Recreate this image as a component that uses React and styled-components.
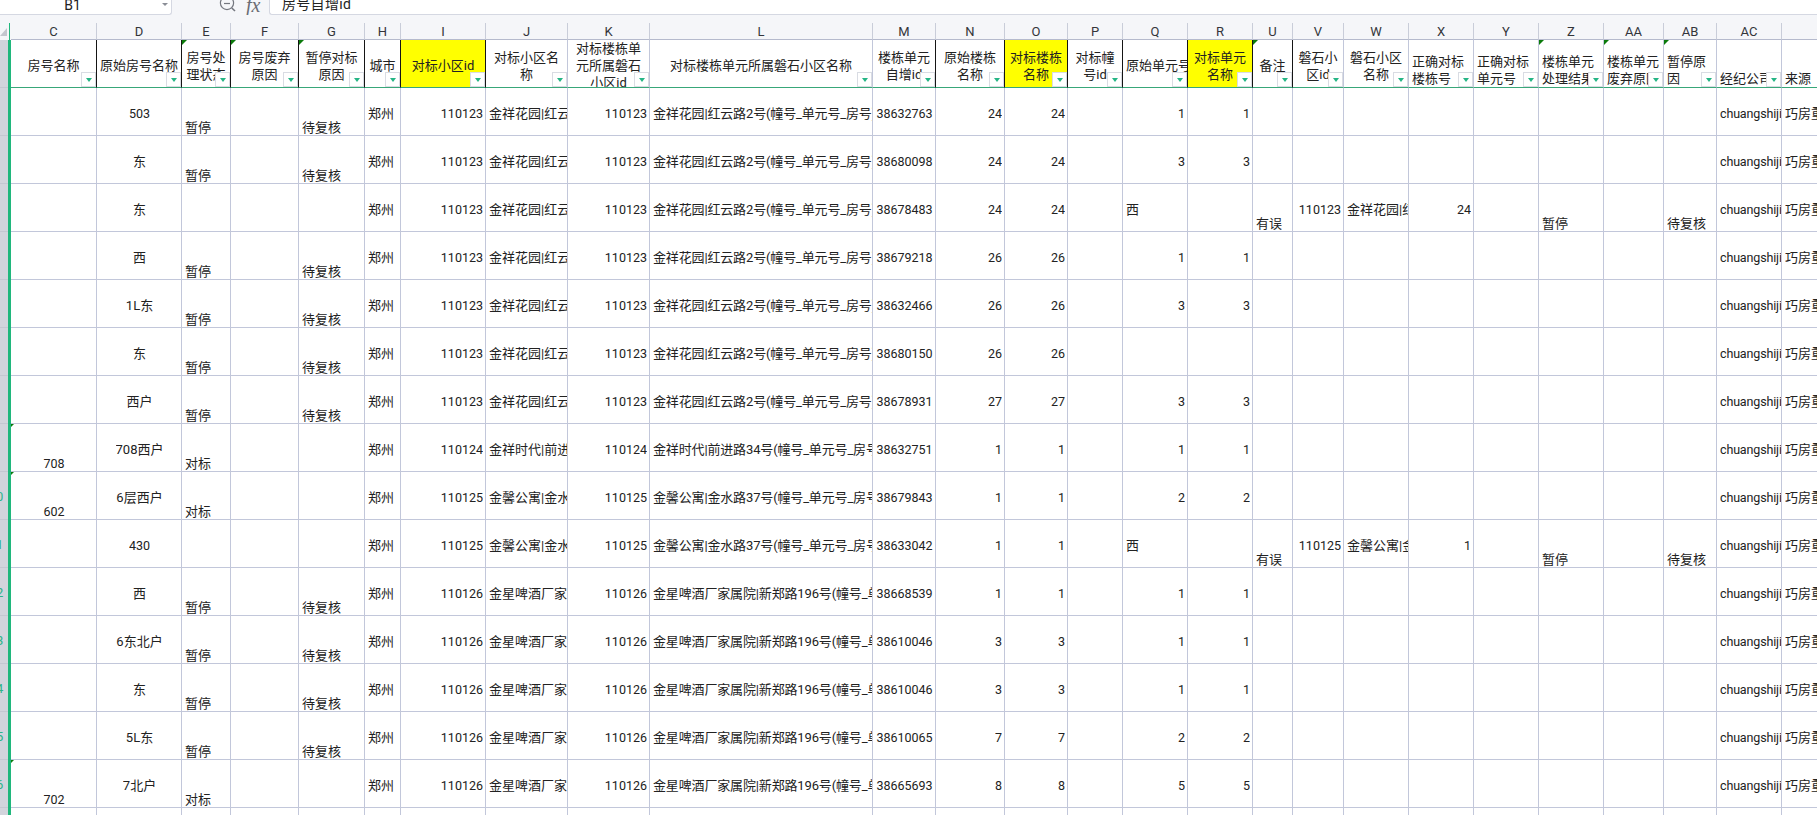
import React from "react";
import styled, { createGlobalStyle } from "styled-components";

const GlobalStyle = createGlobalStyle`
  html, body {
    margin: 0;
    padding: 0;
    background: #ffffff;
    overflow: hidden;
  }
  body {
    font-family: Roboto, "Noto Sans CJK SC", sans-serif;
    font-size: 13px;
    color: #222222;
  }
`;

const GRID_LINE = "#c2c7da";
const DARK_LINE = "#151515";

const columns = [
  { key: "c", name: "C", width: 86, title: "房号名称", h: "center", v: "bottom" },
  { key: "d", name: "D", width: 85, title: "原始房号名称", h: "center", v: "center" },
  { key: "e", name: "E", width: 49, title: "房号处理状态", h: "left", v: "bottom", mark: true },
  { key: "f", name: "F", width: 68, title: "房号废弃原因", h: "left", v: "center", mark: true },
  { key: "g", name: "G", width: 66, title: "暂停对标原因", h: "left", v: "bottom", mark: true },
  { key: "h", name: "H", width: 36, title: "城市", h: "left", v: "center" },
  { key: "i", name: "I", width: 85, title: "对标小区id", h: "right", v: "center", yellow: true },
  { key: "j", name: "J", width: 82, title: "对标小区名称", h: "left", v: "center", light: true },
  { key: "k", name: "K", width: 82, title: "对标楼栋单元所属磐石小区id", h: "right", v: "center", light: true },
  { key: "l", name: "L", width: 223, title: "对标楼栋单元所属磐石小区名称", h: "left", v: "center", light: true },
  { key: "m", name: "M", width: 63, title: "楼栋单元自增id", h: "center", v: "center" },
  { key: "n", name: "N", width: 69, title: "原始楼栋名称", h: "right", v: "center" },
  { key: "o", name: "O", width: 63, title: "对标楼栋名称", h: "right", v: "center", yellow: true },
  { key: "p", name: "P", width: 55, title: "对标幢号id", h: "right", v: "center" },
  { key: "q", name: "Q", width: 65, title: "原始单元号", h: "right", v: "center", nowrap: true },
  { key: "r", name: "R", width: 65, title: "对标单元名称", h: "right", v: "center", yellow: true },
  { key: "u", name: "U", width: 40, title: "备注", h: "left", v: "bottom", mark: true },
  { key: "v", name: "V", width: 51, title: "磐石小区id", h: "right", v: "center", light: true },
  { key: "w", name: "W", width: 65, title: "磐石小区名称", h: "left", v: "center", light: true },
  { key: "x", name: "X", width: 65, title: "正确对标楼栋号", h: "right", v: "center", light: true, titleLeft: true },
  { key: "y", name: "Y", width: 65, title: "正确对标单元号", h: "right", v: "center", light: true, titleLeft: true },
  { key: "z", name: "Z", width: 65, title: "楼栋单元处理结果", h: "left", v: "bottom", light: true, titleLeft: true, mark: true },
  { key: "aa", name: "AA", width: 60, title: "楼栋单元废弃原因", h: "left", v: "center", light: true, titleLeft: true, mark: true },
  { key: "ab", name: "AB", width: 53, title: "暂停原因", h: "left", v: "bottom", light: true, titleLeft: true, mark: true },
  { key: "ac", name: "AC", width: 65, title: "经纪公司", h: "left", v: "center", light: true, titleLeft: true },
  { key: "ad", name: "AD", width: 120, title: "来源", h: "left", v: "center", light: true, titleLeft: true },
];

const template = columns.map((c) => `${c.width}px`).join(" ");

// only the part of each name that shows in its column
const JX = { id: "110123", j: "金祥花园|红云", l: "金祥花园|红云路2号(幢号_单元号_房号)", w: "金祥花园|红" };
const SD = { id: "110124", j: "金祥时代|前进", l: "金祥时代|前进路34号(幢号_单元号_房号" };
const GY = { id: "110125", j: "金馨公寓|金水", l: "金馨公寓|金水路37号(幢号_单元号_房号", w: "金馨公寓|金" };
const PJ = { id: "110126", j: "金星啤酒厂家", l: "金星啤酒厂家属院|新郑路196号(幢号_单" };

const hold = { e: "暂停", g: "待复核" };

const makeRow = (area, m, n, q, r, rest) => ({
  h: "郑州",
  i: area.id,
  j: area.j,
  k: area.id,
  l: area.l,
  m,
  n,
  o: n,
  q,
  r,
  ac: "chuangshiji",
  ad: "巧房重复",
  ...rest,
});

const rows = [
  makeRow(JX, "38632763", "24", "1", "1", { d: "503", ...hold }),
  makeRow(JX, "38680098", "24", "3", "3", { d: "东", ...hold }),
  makeRow(JX, "38678483", "24", "西", "", { d: "东", u: "有误", v: JX.id, w: JX.w, x: "24", z: "暂停", ab: "待复核" }),
  makeRow(JX, "38679218", "26", "1", "1", { d: "西", ...hold }),
  makeRow(JX, "38632466", "26", "3", "3", { d: "1L东", ...hold }),
  makeRow(JX, "38680150", "26", "", "", { d: "东", ...hold }),
  makeRow(JX, "38678931", "27", "3", "3", { d: "西户", ...hold }),
  makeRow(SD, "38632751", "1", "1", "1", { c: "708", d: "708西户", e: "对标", flag: true }),
  makeRow(GY, "38679843", "1", "2", "2", { c: "602", d: "6层西户", e: "对标", flag: true }),
  makeRow(GY, "38633042", "1", "西", "", { d: "430", u: "有误", v: GY.id, w: GY.w, x: "1", z: "暂停", ab: "待复核" }),
  makeRow(PJ, "38668539", "1", "1", "1", { d: "西", ...hold }),
  makeRow(PJ, "38610046", "3", "1", "1", { d: "6东北户", ...hold }),
  makeRow(PJ, "38610046", "3", "1", "1", { d: "东", ...hold }),
  makeRow(PJ, "38610065", "7", "2", "2", { d: "5L东", ...hold }),
  makeRow(PJ, "38665693", "8", "5", "5", { c: "702", d: "7北户", e: "对标", flag: true }),
  {},
];

const Page = styled.div`
  width: 1817px;
  height: 815px;
  overflow: hidden;
  display: flex;
  flex-direction: column;
  background: #ffffff;
`;

const FormulaBar = styled.div`
  height: 15px;
  flex: none;
  display: flex;
  overflow: hidden;
  background: #f5f6f9;
`;

const NameBox = styled.div`
  width: 172px;
  flex: none;
  box-sizing: border-box;
  display: flex;
  align-items: flex-end;
  justify-content: center;
  position: relative;
  padding: 0 26px 2px 0;
  line-height: 14px;
  font-size: 14px;
  background: #ffffff;
  border-right: 1px solid #d5d8e2;
  border-bottom: 1px solid #d5d8e2;
  border-bottom-right-radius: 3px;
`;

const NameCaret = styled.span`
  position: absolute;
  right: 3px;
  top: 3px;
  border-left: 3px solid transparent;
  border-right: 3px solid transparent;
  border-top: 3px solid #8a8d96;
`;

const FormulaTools = styled.div`
  width: 97px;
  flex: none;
  display: flex;
  align-items: flex-end;
  padding-left: 47px;
  gap: 9px;
  box-sizing: border-box;
`;

const FxLabel = styled.span`
  font-family: "Liberation Serif", serif;
  font-style: italic;
  font-size: 20px;
  line-height: 15px;
  height: 15px;
  margin-bottom: 2px;
  color: #6a6d75;
`;

const FormulaInput = styled.div`
  flex: 1;
  box-sizing: border-box;
  background: #ffffff;
  border-left: 1px solid #d5d8e2;
  border-bottom: 1px solid #d5d8e2;
  border-bottom-left-radius: 3px;
  padding: 0 0 3px 12px;
  display: flex;
  align-items: flex-end;
  font-size: 14px;
  line-height: 14px;
  letter-spacing: 0.3px;
`;

const Strip = styled.div`
  height: 8px;
  flex: none;
  background: #f5f6f9;
`;

const Sheet = styled.div`
  flex: 1;
  display: flex;
  min-height: 0;
  overflow: hidden;
`;

const Gutter = styled.div`
  width: 8px;
  flex: none;
  display: flex;
  flex-direction: column;
`;

const Corner = styled.div`
  height: 17px;
  flex: none;
  position: relative;
  background: #f5f6f9;

  &::after {
    content: "";
    position: absolute;
    left: 0;
    top: 5px;
    border-left: 7px solid transparent;
    border-bottom: 8px solid #c3c6ce;
  }
`;

const GutterCell = styled.div`
  height: 48px;
  flex: none;
  box-sizing: border-box;
  overflow: hidden;
  display: flex;
  align-items: center;
  padding-top: 2px;
  background: #d2d4dc;
  border-bottom: 1px solid #c4c7d1;
  color: #2fb38a;
`;

const RowNumber = styled.span`
  flex: none;
  width: 22px;
  margin-left: -15px;
  text-align: center;
`;

const Rail = styled.div`
  width: 3px;
  flex: none;
  background: linear-gradient(to bottom, #f5f6f9 17px, #20b77c 17px);
  position: relative;

  &::before {
    content: "";
    position: absolute;
    left: 1px;
    top: 0;
    width: 1px;
    height: 17px;
    background: #20b77c;
  }
`;

const Table = styled.div`
  display: flex;
  flex-direction: column;
  flex: none;
`;

const ColumnRow = styled.div`
  display: grid;
  flex: none;
  grid-template-columns: ${template};
  height: 17px;
`;

const ColumnName = styled.div`
  box-sizing: border-box;
  text-align: center;
  line-height: 18px;
  color: #33353a;
  background: #f5f6f9;
  border-right: 1px solid #c9cdd9;
  border-bottom: 1px solid #b5bacd;
  overflow: hidden;
  white-space: nowrap;
`;

const HeaderRow = styled.div`
  display: grid;
  flex: none;
  grid-template-columns: ${template};
  height: 48px;
`;

const HeaderCell = styled.div`
  box-sizing: border-box;
  position: relative;
  overflow: hidden;
  display: flex;
  align-items: ${(p) => (p.$left ? "flex-end" : "center")};
  justify-content: ${(p) => (p.$left || p.$nowrap ? "flex-start" : "center")};
  padding: ${(p) => (p.$left ? "0 3px" : "4px 3px 0")};
  text-align: ${(p) => (p.$left ? "left" : "center")};
  line-height: 17px;
  white-space: ${(p) => (p.$nowrap ? "nowrap" : "normal")};
  word-break: break-all;
  background: ${(p) => (p.$yellow ? "#ffff00" : "#ffffff")};
  border-right: 1px solid ${(p) => (p.$light ? GRID_LINE : DARK_LINE)};
  border-bottom: 1px solid #38a779;
`;

const CornerMark = styled.span`
  position: absolute;
  left: 0;
  top: 0;
  border-top: ${(p) => p.$size}px solid #0b7a0b;
  border-right: ${(p) => p.$size}px solid transparent;
  z-index: 1;
`;

const FilterButton = styled.span`
  position: absolute;
  right: 0;
  bottom: 0;
  box-sizing: border-box;
  width: 15px;
  height: 15px;
  display: flex;
  align-items: center;
  justify-content: center;
  background: #ffffff;
  border: 1px solid #d9dce3;
  z-index: 1;

  &::after {
    content: "";
    border-left: 3px solid transparent;
    border-right: 3px solid transparent;
    border-top: 4px solid #25b585;
  }
`;

const DataRow = styled.div`
  display: grid;
  flex: none;
  grid-template-columns: ${template};
  height: 48px;
`;

const DataCell = styled.div`
  box-sizing: border-box;
  position: relative;
  min-width: 0;
  overflow: hidden;
  display: flex;
  align-items: ${(p) => (p.$v === "bottom" ? "flex-end" : "center")};
  justify-content: ${(p) =>
    p.$h === "right" ? "flex-end" : p.$h === "center" ? "center" : "flex-start"};
  padding-top: ${(p) => (p.$v === "bottom" ? "0" : "4px")};
  padding-left: 3px;
  padding-right: ${(p) => (p.$h === "left" ? "0" : "2px")};
  line-height: 14px;
  white-space: nowrap;
  background: #ffffff;
  border-right: 1px solid ${GRID_LINE};
  border-bottom: 1px solid ${GRID_LINE};
`;

const CellText = styled.span`
  min-width: 0;
  overflow: hidden;
  letter-spacing: ${(p) => (p.$long ? "-0.15px" : "0")};
  font-size: ${(p) => (p.$latin ? "12.5px" : "13px")};
`;

function ZoomIcon() {
  return (
    <svg width="18" height="15" viewBox="0 0 18 15" fill="none" stroke="#74777f" strokeWidth="1.2">
      <circle cx="8" cy="3" r="6.6" />
      <path d="M5 3.5H11" />
      <path d="M12.8 8L16 11" strokeWidth="1.6" />
    </svg>
  );
}

const isLatin = (text) => /^[\x00-\x7f]+$/.test(text);

function App() {
  return (
    <Page>
      <GlobalStyle />
      <FormulaBar>
        <NameBox>
          B1
          <NameCaret />
        </NameBox>
        <FormulaTools>
          <ZoomIcon />
          <FxLabel>fx</FxLabel>
        </FormulaTools>
        <FormulaInput>房号自增id</FormulaInput>
      </FormulaBar>
      <Strip />
      <Sheet>
        <Gutter>
          <Corner />
          <GutterCell />
          {rows.map((row, i) => (
            <GutterCell key={i}>
              <RowNumber>{i + 2}</RowNumber>
            </GutterCell>
          ))}
        </Gutter>
        <Rail />
        <Table>
          <ColumnRow>
            {columns.map((col) => (
              <ColumnName key={col.key}>{col.name}</ColumnName>
            ))}
          </ColumnRow>
          <HeaderRow>
            {columns.map((col) => (
              <HeaderCell
                key={col.key}
                $yellow={col.yellow}
                $light={col.light}
                $left={col.titleLeft}
                $nowrap={col.nowrap}
              >
                {col.mark && <CornerMark $size={5} />}
                <span>{col.title}</span>
                <FilterButton />
              </HeaderCell>
            ))}
          </HeaderRow>
          {rows.map((row, i) => (
            <DataRow key={i}>
              {columns.map((col) => {
                const value = row[col.key];
                const latin = value && isLatin(value);
                const numeric = value && !isNaN(value);
                return (
                  <DataCell
                    key={col.key}
                    $v={col.v}
                    $h={value && !numeric && col.h === "right" ? "left" : col.h}
                  >
                    {col.key === "c" && row.flag && <CornerMark $size={3} />}
                    {value && (
                      <CellText $latin={latin} $long={value && value.length > 10}>
                        {value}
                      </CellText>
                    )}
                  </DataCell>
                );
              })}
            </DataRow>
          ))}
        </Table>
      </Sheet>
    </Page>
  );
}

export default App;
